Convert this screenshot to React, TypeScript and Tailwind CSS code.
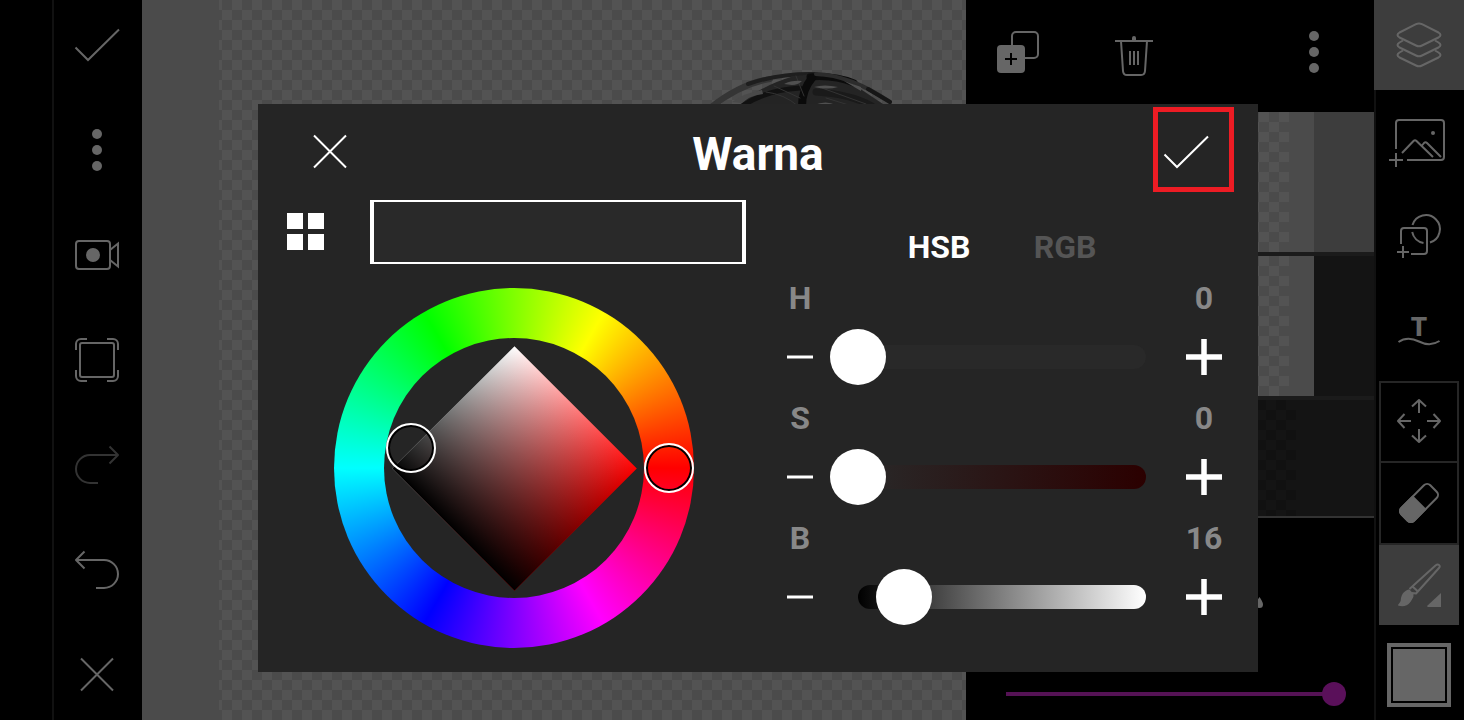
import { useState } from "react";
import type { ReactNode } from "react";

const CHECKER =
  "bg-[conic-gradient(#535353_25%,#4b4b4b_0_50%,#535353_0_75%,#4b4b4b_0)] bg-[length:20px_20px]";
const DARK_CHECKER =
  "bg-[conic-gradient(#141414_25%,#111_0_50%,#141414_0_75%,#111_0)] bg-[length:20px_20px]";

interface IconProps {
  size?: number;
  width?: number;
  children: ReactNode;
}

function Icon({ size = 48, width = 2, children }: IconProps) {
  return (
    <svg
      width={size}
      height={size}
      viewBox={`0 0 ${size} ${size}`}
      fill="none"
      stroke="currentColor"
      strokeWidth={width}
      strokeLinejoin="round"
      className="shrink-0"
      aria-hidden="true">
      {children}
    </svg>
  );
}

const CheckIcon = () => (
  <Icon>
    <path d="M2.5 26.5 15 39 46 8.5" strokeLinejoin="miter" />
  </Icon>
);

const CloseIcon = () => (
  <Icon>
    <path d="M8 7.5l32 32M40 7.5l-32 32" />
  </Icon>
);

const DotsIcon = () => (
  <Icon>
    <g fill="currentColor" stroke="none">
      <circle cx="24" cy="8" r="5" />
      <circle cx="24" cy="24" r="5" />
      <circle cx="24" cy="40" r="5" />
    </g>
  </Icon>
);

const CameraIcon = () => (
  <Icon>
    <rect x="3" y="10" width="34" height="28" rx="3" />
    <circle cx="20" cy="24" r="7" fill="currentColor" stroke="none" />
    <path d="M37 19l8-6.5v23L37 29" strokeLinejoin="miter" />
  </Icon>
);

const FrameIcon = () => (
  <Icon>
    <rect x="7" y="7" width="34" height="34" rx="2" />
    <path d="M3 14V8a5 5 0 0 1 5-5h6M34 3h6a5 5 0 0 1 5 5v6M45 34v6a5 5 0 0 1-5 5h-6M14 45H8a5 5 0 0 1-5-5v-6" />
  </Icon>
);

const RedoIcon = () => (
  <Icon>
    <path d="M25 42h-8a14 14 0 0 1 0-28h28M36.5 5.5 45 14l-8.5 8.5" />
  </Icon>
);

const UndoIcon = () => (
  <Icon>
    <path d="M23 42h8a14 14 0 0 0 0-28H3M11.5 5.5 3 14l8.5 8.5" />
  </Icon>
);

const DuplicateIcon = () => (
  <Icon>
    <path d="M18 17V8a4 4 0 0 1 4-4h18a4 4 0 0 1 4 4v18a4 4 0 0 1-4 4h-9" />
    <rect x="3" y="17" width="28" height="28" rx="4" fill="currentColor" stroke="none" />
    <path d="M17 25v12M11 31h12" stroke="#000" />
  </Icon>
);

const TrashIcon = () => (
  <Icon>
    <path d="M5 13h38M11 13l2 30q.3 4 4 4h14q3.7 0 4-4l2-30M20 23v14M24 23v14M28 23v14" />
    <path d="M22 13v-3a2 2 0 0 1 4 0v3z" fill="currentColor" stroke="none" />
  </Icon>
);

const LayersIcon = () => (
  <Icon>
    <path d="M21 3.2q3-1.4 6 0l16.5 8.3q4 2.5 0 5L27 24.5q-3 1.5-6 0L4.5 16.5q-4-2.5 0-5z" />
    <path d="M8 19.5l-3.5 2q-4 2.5 0 5l16.5 8q3 1.5 6 0l16.5-8q4-2.5 0-5l-3.5-2" />
    <path d="M8 29.5l-3.5 2q-4 2.5 0 5l16.5 8q3 1.5 6 0l16.5-8q4-2.5 0-5l-3.5-2" />
  </Icon>
);

const AddImageIcon = () => (
  <Icon size={64}>
    <path d="M9 42V16a3 3 0 0 1 3-3h42a3 3 0 0 1 3 3v34a3 3 0 0 1-3 3H20" />
    <path d="M9 46v14M2 53h14M15 46l11.5-12q1.5-1.5 3 0L46 50M35 38.5l2-2.5q1.5-1.5 3 0L54 50" />
    <circle cx="46" cy="26" r="2" fill="currentColor" stroke="none" />
  </Icon>
);

const AddShapeIcon = () => (
  <Icon size={64}>
    <path d="M14 40V27a3 3 0 0 1 3-3h20a3 3 0 0 1 3 3v20a3 3 0 0 1-3 3H24" />
    <path d="M16 42v12M10 48h12" />
    <path d="M25.5 21A14 14 0 1 1 43 38.5M25.2 28A14 14 0 0 0 36.5 39" />
  </Icon>
);

const TextIcon = () => (
  <Icon size={64}>
    <text
      x="32"
      y="35"
      textAnchor="middle"
      fill="currentColor"
      stroke="none"
      className="font-['Roboto',sans-serif] text-[26px] font-black">
      T
    </text>
    <path d="M11.5 41c7-5 13.500-4 20.500-.5s13.500 4 20.500-.5" />
  </Icon>
);

const MoveIcon = () => (
  <Icon>
    <path d="M24 2v13M17 8.5 24 2l7 6.5M24 44V31M17 37.5 24 44l7-6.5M3 23h13M9.5 16 3 23l6.5 7M45 23H32M38.5 16 45 23l-6.5 7" />
  </Icon>
);

const EraserIcon = () => (
  <Icon>
    <g transform="rotate(-45 24 24)">
      <rect x="3.5" y="15" width="41" height="18" rx="4.5" />
      <path d="M24 15v18H8a4.5 4.5 0 0 1-4.5-4.5v-9A4.5 4.5 0 0 1 8 15z" fill="currentColor" />
    </g>
  </Icon>
);

const BrushIcon = () => (
  <Icon size={80}>
    <path d="M30.5 44 56.500 20.500q2-1.500 3.500-.5t0 3L37 48.500l-4-.5" />
    <path d="M33.500 41.500l5.500 5" />
    <path
      d="M26.500 46q2-2 4-1.500l4 4.500q.5 3-1.500 5.500-3 5.500-7.500 6.500-3.500.5-6.500-.5 0-1.500 1.500-2.500 1.500-1.500 1.500-5 1-5 4.500-7z"
      fill="currentColor"
      stroke="none"
    />
    <path d="M62 48v14H49q-1.500-.5-.5-1.500z" fill="currentColor" stroke="none" />
  </Icon>
);

const GridIcon = () => (
  <svg width="38" height="38" viewBox="0 0 38 38" fill="currentColor" aria-hidden="true">
    <path d="M0 0h16v16H0zM21 0h16v16H21zM0 21h16v16H0zM21 21h16v16H21z" />
  </svg>
);

interface ToolButtonProps {
  label: string;
  className?: string;
  children: ReactNode;
}

function ToolButton({ label, className = "", children }: ToolButtonProps) {
  return (
    <button
      type="button"
      aria-label={label}
      className={`flex shrink-0 items-center justify-center ${className}`}>
      {children}
    </button>
  );
}

function LeftToolbar() {
  return (
    <nav className="flex w-[90px] shrink-0 flex-col justify-between bg-black text-[#666] shadow-[inset_2px_0_0_#111]">
      <ToolButton label="Done" className="h-[90px]"><CheckIcon /></ToolButton>
      <ToolButton label="More" className="h-[90px]"><DotsIcon /></ToolButton>
      <ToolButton label="Record" className="h-[90px]"><CameraIcon /></ToolButton>
      <ToolButton label="Fit to screen" className="h-[90px]"><FrameIcon /></ToolButton>
      <ToolButton label="Redo" className="h-[90px] text-[#333]"><RedoIcon /></ToolButton>
      <ToolButton label="Undo" className="h-[90px]"><UndoIcon /></ToolButton>
      <ToolButton label="Close" className="h-[90px]"><CloseIcon /></ToolButton>
    </nav>
  );
}

function Canvas() {
  return (
    <main className="relative flex min-w-0 flex-1 overflow-hidden bg-[#4b4b4b] pl-[77px]">
      <div className={`flex-1 ${CHECKER} bg-[position:3px_0]`} />
      {/* Brush strokes on the page */}
      <svg
        width="200"
        height="60"
        viewBox="0 0 200 60"
        fill="none"
        strokeLinecap="round"
        className="absolute right-[62px] top-[64px]"
        aria-hidden="true">
        <path d="M6 44Q36 20 66 15" stroke="#353535" strokeWidth="6" />
        <path d="M44 20Q76 9 112 10" stroke="#1e1e1e" strokeWidth="4" />
        <path d="M34 44Q50 24 90 12l22-2 34 8 36 24-20 4z" fill="#242424" />
        <path d="M38 42Q62 26 96 24" stroke="#111" strokeWidth="5" />
        <path d="M106 13q24-2 44 6" stroke="#0c0c0c" strokeWidth="7" />
        <path d="M108 14q-10 12-10 28" stroke="#0a0a0a" strokeWidth="8" />
        <path d="M112 28q34 2 56 14" stroke="#1a1a1a" strokeWidth="7" />
        <path d="M62 28q18 2 32 14M70 22l26 12M92 12l8 20M118 24l44 16M122 34l26 8" stroke="#333" strokeWidth="1" />
        <path d="M112 10Q146 11 186 38" stroke="#2c2c2c" strokeWidth="4" />
        <path d="M164 25l22 13" stroke="#161616" strokeWidth="4" />
        <path d="M80 20q8-4 18-3-4 4-10 4zM110 23q10-3 24 0-10 3-24 0zM140 17l17 6v4zM110 41q12-5 22 0z" fill="#505050" />
        <path d="M28 38q12-9 30-12l1 4q-14 2-22 9z" fill="#4a4a4a" />
      </svg>
    </main>
  );
}

function LayerPanel() {
  const [size, setSize] = useState(100);

  return (
    <aside className="flex w-[408px] shrink-0 flex-col bg-black text-[#666]">
      <div className="flex pb-2">
        <ToolButton label="Duplicate layer" className="h-[104px] w-[104px]"><DuplicateIcon /></ToolButton>
        <ToolButton label="Delete layer" className="h-[104px] w-[128px]"><TrashIcon /></ToolButton>
        <ToolButton label="Layer options" className="ml-auto h-[104px] w-[120px]"><DotsIcon /></ToolButton>
      </div>

      {/* Layers */}
      <ul className="flex flex-col gap-1 border-b-2 border-[#333] bg-[#1b1b1b]">
        <li className="flex h-[140px] bg-[#3d3d3d] pr-[60px]">
          <div className="flex flex-1 bg-[#4b4b4b] pr-[25px]">
            <div className={`flex-1 ${CHECKER} bg-[position:right_top]`} />
          </div>
        </li>
        <li className="flex h-[140px] bg-[#141414] pr-[60px]">
          <div className="flex flex-1 bg-[#4b4b4b] pr-[25px]">
            <div className={`flex-1 ${CHECKER} bg-[position:right_top]`} />
          </div>
        </li>
        <li className="flex h-[116px] bg-[#141414] pr-[78px]">
          <div className={`flex-1 ${DARK_CHECKER} bg-[position:right_top]`} />
        </li>
      </ul>

      <div className="flex flex-1 flex-col justify-between pb-[14px] pt-[70px]">
        <div className="flex justify-end pr-[111px]">
          <svg width="24" height="24" viewBox="0 0 24 24" fill="currentColor" aria-hidden="true">
            <path d="M20.500 9q3.500 5 3.500 7.500a3.500 3.500 0 0 1-7 0q0-2.500 3.500-7.500z" />
          </svg>
        </div>
        <div className="mx-7 grid items-center">
          <div className="mx-3 h-1 bg-[#551255] [grid-area:1/1]" />
          <input
            type="range"
            aria-label="Brush size"
            value={size}
            onChange={(e) => setSize(Number(e.target.value))}
            className="m-0 h-6 w-full appearance-none bg-transparent [grid-area:1/1] [&::-webkit-slider-thumb]:h-6 [&::-webkit-slider-thumb]:w-6 [&::-webkit-slider-thumb]:appearance-none [&::-webkit-slider-thumb]:rounded-full [&::-webkit-slider-thumb]:bg-[#5a105a]"
          />
        </div>
      </div>
    </aside>
  );
}

function RightToolbar() {
  return (
    <nav className="flex w-[90px] shrink-0 flex-col bg-black text-[#666] shadow-[inset_2px_0_0_#111]">
      <ToolButton label="Layers" className="h-[90px] bg-[#3d3d3d]"><LayersIcon /></ToolButton>
      <ToolButton label="Add image" className="h-[97px]"><AddImageIcon /></ToolButton>
      <ToolButton label="Add shape" className="h-[97px]"><AddShapeIcon /></ToolButton>
      <ToolButton label="Add text" className="h-[97px]"><TextIcon /></ToolButton>
      <div className="mx-[5px] flex flex-col">
        <ToolButton label="Move" className="h-[82px] border-2 border-[#262626]"><MoveIcon /></ToolButton>
        <ToolButton label="Eraser" className="h-[82px] border-2 border-t-0 border-[#262626]"><EraserIcon /></ToolButton>
        <ToolButton label="Brush" className="h-20 bg-[#3d3d3d]"><BrushIcon /></ToolButton>
      </div>
      <button
        type="button"
        aria-label="Current color"
        className="mx-auto mt-[18px] flex h-16 w-16 border-4 border-[#666] p-0.5">
        <span className="flex-1 self-stretch bg-[#666]" />
      </button>
    </nav>
  );
}

function ColorWheel() {
  return (
    <div className="relative flex h-[360px] w-[360px] items-center justify-center rounded-full bg-[conic-gradient(from_90deg,#f00,#f0f,#00f,#0ff,#0f0,#ff0,#f00)]">
      <div className="flex h-[260px] w-[260px] items-center justify-center rounded-full bg-[#252525]">
        <div className="h-[173px] w-[173px] rotate-45 bg-[linear-gradient(to_top,#000,transparent),linear-gradient(to_right,#fff,#f00)]" />
      </div>
      {/* Picker handles */}
      <span className="absolute left-[52px] top-[135px] h-[50px] w-[50px] rounded-full border-2 border-white shadow-[inset_0_0_0_2px_#000]" />
      <span className="absolute right-0 top-[155px] h-[50px] w-[50px] rounded-full border-2 border-white shadow-[inset_0_0_0_2px_#000]" />
    </div>
  );
}

interface ChannelProps {
  name: string;
  initial: number;
  track: string;
}

function Channel({ name, initial, track }: ChannelProps) {
  const [value, setValue] = useState(initial);
  const id = `channel-${name}`;

  return (
    <div className="mb-0.5">
      <div className="flex h-[42px] items-center justify-between text-[32px] leading-10 text-[#888]">
        <label htmlFor={id} className="w-[60px] text-center">{name}</label>
        <output htmlFor={id} className="w-[60px] text-center">{value}</output>
      </div>
      <div className="flex h-[76px] items-center">
        <button
          type="button"
          aria-label={`Decrease ${name}`}
          onClick={() => setValue(Math.max(0, value - 1))}
          className="flex h-full w-[60px] items-center justify-center">
          <svg width="26" height="4" viewBox="0 0 26 4" stroke="#fff" strokeWidth="3" aria-hidden="true">
            <path d="M0 2h26" />
          </svg>
        </button>
        <div className="grid flex-1 items-center">
          <div className={`mx-7 h-6 rounded-full [grid-area:1/1] ${track}`} />
          <input
            id={id}
            type="range"
            min={0}
            max={100}
            value={value}
            onChange={(e) => setValue(Number(e.target.value))}
            className="m-0 h-14 w-full appearance-none bg-transparent [grid-area:1/1] [&::-webkit-slider-thumb]:h-14 [&::-webkit-slider-thumb]:w-14 [&::-webkit-slider-thumb]:appearance-none [&::-webkit-slider-thumb]:rounded-full [&::-webkit-slider-thumb]:bg-white"
          />
        </div>
        <button
          type="button"
          aria-label={`Increase ${name}`}
          onClick={() => setValue(Math.min(100, value + 1))}
          className="flex h-full w-[60px] items-center justify-center">
          <svg width="36" height="36" viewBox="0 0 36 36" stroke="#fff" strokeWidth="5.5" aria-hidden="true">
            <path d="M18 0v36M0 18h36" />
          </svg>
        </button>
      </div>
    </div>
  );
}

function ColorDialog() {
  const [mode, setMode] = useState("HSB");

  return (
    <div
      role="dialog"
      aria-labelledby="dialog-title"
      className="w-full max-w-[1000px] bg-[#252525] font-['Roboto',sans-serif] font-bold text-white">
      {/* Header */}
      <header className="flex h-24 items-center justify-between">
        <ToolButton label="Cancel" className="h-24 w-36"><CloseIcon /></ToolButton>
        <h2 id="dialog-title" className="pt-1 text-[46px] leading-[56px]">Warna</h2>
        <div className="relative">
          <ToolButton label="Apply" className="h-24 w-36"><CheckIcon /></ToolButton>
          <span className="pointer-events-none absolute left-[39px] top-[3px] h-[85px] w-[81px] border-5 border-[#ed1c24]" />
        </div>
      </header>

      <div className="flex">
        <section className="flex w-[488px] shrink-0 flex-col gap-6 pb-6">
          <div className="flex">
            <ToolButton label="Palettes" className="mr-4 h-16 w-24"><GridIcon /></ToolButton>
            <div className="h-16 flex-1 border-x-4 border-y-2 border-white bg-[#292929]" />
          </div>
          <div className="flex justify-center pl-6">
            <ColorWheel />
          </div>
        </section>

        <section className="min-w-0 flex-1 px-6 pt-[17px]">
          <div className="flex justify-center">
            {["HSB", "RGB"].map((tab) => (
              <button
                key={tab}
                type="button"
                aria-pressed={mode === tab}
                onClick={() => setMode(tab)}
                className={`h-[60px] w-[126px] text-[32px] leading-10 ${
                  mode === tab ? "text-white" : "text-[#555]"
                }`}>
                {tab}
              </button>
            ))}
          </div>
          <Channel name="H" initial={0} track="bg-[#292929]" />
          <Channel name="S" initial={0} track="bg-[linear-gradient(to_right,#292929,#2b0000)]" />
          <Channel name="B" initial={16} track="bg-[linear-gradient(to_right,#000,#fff)]" />
        </section>
      </div>
    </div>
  );
}

export default function App() {
  return (
    <div className="relative flex min-h-screen bg-black pl-[52px]">
      <LeftToolbar />
      <Canvas />
      <LayerPanel />
      <RightToolbar />
      <div className="absolute bottom-0 left-[52px] right-0 top-14 flex items-center justify-center">
        <ColorDialog />
      </div>
    </div>
  );
}
